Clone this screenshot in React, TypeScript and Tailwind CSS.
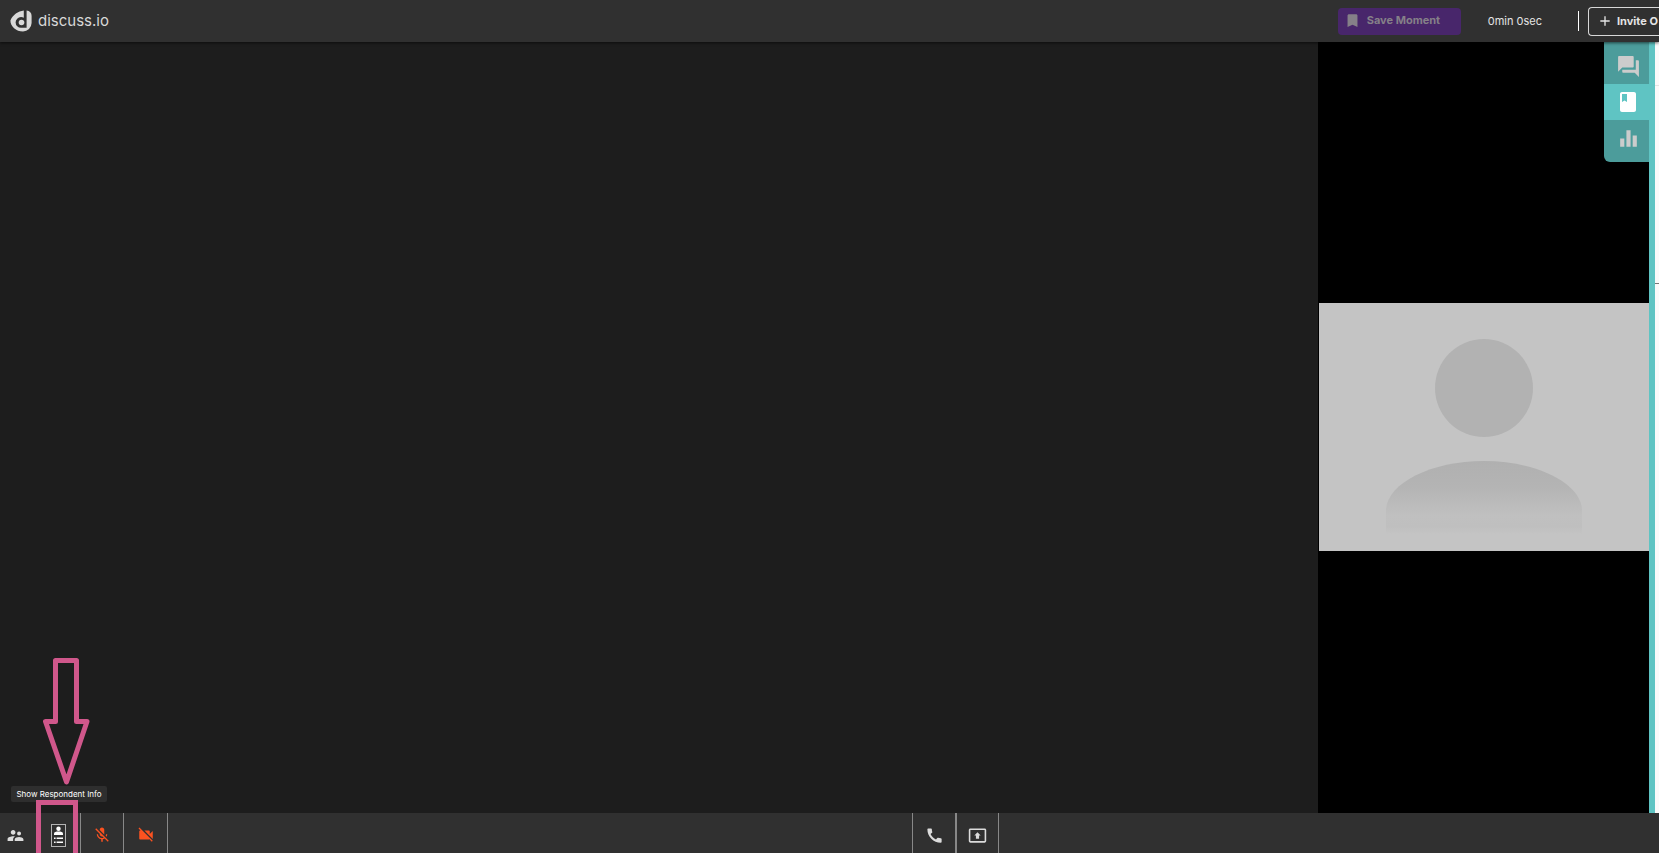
import React from 'react';
import {
  MdAdd,
  MdBook,
  MdBookmark,
  MdCall,
  MdEqualizer,
  MdForum,
  MdMicOff,
  MdPresentToAll,
  MdSupervisorAccount,
  MdVideocamOff,
} from 'react-icons/md';

const Logo = () => (
  <a href="#" className="flex items-center gap-1.5 text-[#d8d8d8]">
    <svg width="22" height="22" viewBox="0 0 22 22" aria-hidden="true">
      <path
        fill="currentColor"
        d="M13.8 0.5V7.8A5.6 5.6 0 0 0 11 7.1A5.4 5.4 0 0 0 5.6 12.5A5.4 5.4 0 0 0 11 17.8H16.6V0.6C19.8 1 21.6 2.8 21.6 6V13A8.6 8.6 0 0 1 13 21.4C6 21.4 0.4 16.4 0.4 10.4C3 4.6 8 1.4 13.8 0.5Z"
      />
      <circle cx="11.5" cy="12.5" r="2.8" fill="currentColor" />
    </svg>
    <span className="text-[15px]">discuss.io</span>
  </a>
);

const Header = () => (
  <header className="z-10 flex h-[42px] shrink-0 items-center justify-between bg-[#303030] pl-2.5 shadow-[0_1px_3px_rgba(0,0,0,0.6)]">
    <Logo />
    <div className="flex items-center text-[11px] text-[#e4e4e4]">
      <button className="mr-[27px] flex h-[27px] w-[123px] items-center gap-1.5 rounded-sm bg-[#48266b] pb-0.5 pl-1.5 font-bold text-[#858088]">
        <MdBookmark size={17} />
        Save Moment
      </button>
      <span>0min 0sec</span>
      <div className="ml-9 h-5 w-px bg-white" />
      <button className="ml-[9px] flex h-[29px] w-[71px] items-center gap-1 rounded-l-sm border border-r-0 border-[#d8d8d8] pl-2 font-bold whitespace-nowrap">
        <MdAdd size={16} className="shrink-0" />
        Invite O
      </button>
    </div>
  </header>
);

const SideTabs = () => (
  <nav className="absolute top-0 right-0 flex w-[45px] flex-col overflow-hidden rounded-bl-md text-[#cccccc]">
    <button aria-label="Chat" className="flex h-[42px] items-center justify-center bg-[#4c9c9b] pt-1.5 pl-1">
      <MdForum size={25} />
    </button>
    <button aria-label="Notes" className="flex h-9 items-center justify-center bg-[#5fc4c3] pl-0.5 text-white">
      <MdBook size={24} />
    </button>
    <button aria-label="Polls" className="flex h-[42px] items-center justify-center bg-[#4c9c9b] pb-1.5 pl-1">
      <MdEqualizer size={25} />
    </button>
  </nav>
);

const Avatar = () => (
  <svg viewBox="0 0 330 248" className="w-full bg-[#c4c4c4]" role="img" aria-label="Participant">
    <defs>
      <linearGradient id="shoulders" x1="0" y1="0" x2="0" y2="1">
        <stop offset="0" stopColor="#b0b0b0" />
        <stop offset="0.35" stopColor="#b4b4b4" />
        <stop offset="0.75" stopColor="#c0c0c0" />
        <stop offset="0.9" stopColor="#bfbfbf" />
        <stop offset="1" stopColor="#c4c4c4" />
      </linearGradient>
    </defs>
    <circle cx="165" cy="85" r="49" fill="#b2b2b2" />
    <path d="M67 231V206C69 180 112 158 165 158S261 180 263 206V231Z" fill="url(#shoulders)" />
  </svg>
);

const RespondentIcon = () => (
  <svg width="15" height="23" viewBox="0 0 15 23" fill="currentColor" aria-hidden="true">
    <rect x="0.5" y="0.5" width="14" height="22" fill="none" stroke="#b4b4b4" />
    <circle cx="7.5" cy="4.8" r="2.2" />
    <path d="M3 11V9.4C3 7.9 5 7.4 7.5 7.4S12 7.9 12 9.4V11Z" />
    <path d="M3 13.4h1.6v1.6H3zM5.6 13.4H12v1.6H5.6zM3 17.4h1.6V19H3zM5.6 17.4H12V19H5.6z" />
  </svg>
);

const Arrow = () => (
  <svg width="48" height="130" viewBox="0 0 48 130" fill="none" aria-hidden="true">
    <path
      d="M12.5 2.5H33.5V63.5H44L23.5 124L2.5 63.5H12.5Z"
      stroke="#d0578b"
      strokeWidth="5"
      strokeLinejoin="round"
    />
  </svg>
);

const Footer = () => (
  <footer className="relative flex h-10 shrink-0 bg-[#303030] text-[#dcdcdc]">
    <button aria-label="Participants" className="flex w-[37px] items-center pt-1 pl-1.5">
      <MdSupervisorAccount size={19} />
    </button>
    <button
      aria-label="Show Respondent Info"
      className="flex w-11 items-center justify-center border-r border-[#888888] pt-1 text-white"
    >
      <RespondentIcon />
    </button>
    <button
      aria-label="Unmute"
      className="flex w-[43px] items-center justify-center border-r border-[#888888] pt-1 text-[#fb5220]"
    >
      <MdMicOff size={18} />
    </button>
    <button
      aria-label="Start camera"
      className="flex w-11 items-center justify-center border-r border-[#888888] pt-1 text-[#fb5220]"
    >
      <MdVideocamOff size={18} />
    </button>
    <div className="absolute left-[55%] flex h-full">
      <button
        aria-label="Call"
        className="flex w-11 items-center justify-center border-x border-[#888888] pt-1"
      >
        <MdCall size={19} />
      </button>
      <button
        aria-label="Share screen"
        className="flex w-[43px] items-center justify-center border-x border-[#888888] pt-1"
      >
        <MdPresentToAll size={19} />
      </button>
    </div>

    <div className="pointer-events-none absolute -top-[155px] left-[43px]">
      <Arrow />
    </div>
    <div
      role="tooltip"
      className="absolute -top-[27px] left-[11px] flex h-4 w-24 items-center justify-center rounded-xs bg-[#2e2e2e] pb-px text-[8px] whitespace-nowrap text-white"
    >
      Show Respondent Info
    </div>
    <div className="pointer-events-none absolute -top-[13px] bottom-0 left-9 w-[42px] border-5 border-b-0 border-[#d0578b]" />
  </footer>
);

export default function App() {
  return (
    <div className="flex h-screen flex-col overflow-hidden bg-[#1d1d1d] font-['Inter',sans-serif]">
      <Header />
      <main className="flex min-h-0 flex-1">
        <section className="flex-1 bg-[#1d1d1d]" />
        <section className="relative flex w-[331px] items-center bg-black pb-px pl-px">
          <Avatar />
          <SideTabs />
        </section>
        <aside className="w-2.5 border-l-6 border-[#5fc4c3] bg-[#fafafa]">
          <div className="h-11 border-b border-[#e4e4e4]" />
          <div className="h-[198px] border-b border-[#777777]" />
        </aside>
      </main>
      <Footer />
    </div>
  );
}
